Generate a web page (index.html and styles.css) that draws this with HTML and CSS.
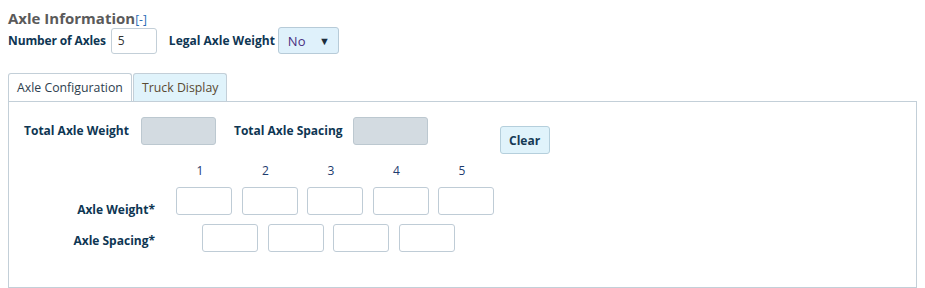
FILE: index.html
```html
<!DOCTYPE html>
<html lang="en">
<head>
<meta charset="UTF-8">
<title>Axle Information</title>
<link rel="stylesheet" href="styles.css">
</head>
<body>

<div class="section">
    <h3 class="title">Axle Information<a href="#" class="toggle">[-]</a></h3>

    <div class="top-row">
        <label class="lbl tight" for="numAxles">Number of Axles</label>
        <input type="text" id="numAxles" class="num-input" value="5">
        <label class="lbl legal" for="legal">Legal Axle Weight</label>
        <div class="select">
            <span class="select-val">No</span>
            <span class="select-arrow">&#9660;</span>
        </div>
    </div>

    <div class="tabs">
        <div class="tab active">Axle Configuration</div>
        <div class="tab">Truck Display</div>
    </div>

    <div class="panel">
        <div class="totals">
            <span class="lbl">Total Axle Weight</span>
            <div class="readonly"></div>
            <span class="lbl">Total Axle Spacing</span>
            <div class="readonly"></div>
            <button type="button" class="clear-btn">Clear</button>
        </div>

        <div class="grid-row numbers">
            <span class="row-label"></span>
            <span class="num">1</span>
            <span class="num">2</span>
            <span class="num">3</span>
            <span class="num">4</span>
            <span class="num">5</span>
        </div>
        <div class="grid-row weight">
            <span class="row-label">Axle Weight*</span>
            <input type="text" class="cell">
            <input type="text" class="cell">
            <input type="text" class="cell">
            <input type="text" class="cell">
            <input type="text" class="cell">
        </div>
        <div class="grid-row spacing">
            <span class="row-label">Axle Spacing*</span>
            <input type="text" class="cell">
            <input type="text" class="cell">
            <input type="text" class="cell">
            <input type="text" class="cell">
        </div>
    </div>
</div>

</body>
</html>
```

FILE: styles.css
```css
body {
    margin: 8px 8px 0 8px;
    font-family: "Open Sans", Arial, sans-serif;
    background-color: #fff;
    color: #333;
}
.title {
    margin: 0;
    font-size: 15px;
    font-weight: bold;
    color: #5a5a5a;
    line-height: 20px;
    height: 19px;
}
.toggle {
    font-size: 12px;
    font-weight: normal;
    color: #2a6db5;
    text-decoration: none;
}
.top-row {
    display: flex;
    align-items: center;
    height: 27px;
}
.lbl {
    font-size: 12px;
    font-weight: bold;
    color: #0e3653;
    white-space: nowrap;
}
.tight {
    letter-spacing: -0.13px;
}
.num-input {
    width: 46px;
    height: 26px;
    margin-left: 5px;
    padding: 0 6px;
    box-sizing: border-box;
    border: 1px solid #c3cfd8;
    border-radius: 3px;
    font-family: inherit;
    font-size: 12px;
    color: #333;
}
.legal {
    margin-left: 12px;
}
.select {
    display: flex;
    align-items: center;
    justify-content: space-between;
    width: 61px;
    height: 27px;
    margin-left: 3px;
    padding: 0 8px 0 9px;
    box-sizing: border-box;
    background-color: #dff1fb;
    border: 1px solid #b7cbd8;
    border-radius: 3px;
}
.select-val {
    font-size: 13px;
    color: #4a2f80;
}
.select-arrow {
    font-size: 11px;
    color: #1d2d3d;
}
.tabs {
    display: flex;
    margin-top: 19px;
}
.tab {
    height: 28px;
    line-height: 27px;
    padding: 0 8px;
    box-sizing: border-box;
    border: 1px solid #c3cfd8;
    border-bottom: none;
    border-radius: 3px 3px 0 0;
    font-size: 12.3px;
    white-space: nowrap;
    background-color: #e0f3fb;
    color: #5a4a32;
    margin-left: 1px;
}
.tab.active {
    background-color: #fff;
    color: #2e3e4e;
    margin-left: 0;
    width: 124px;
}
.panel {
    border: 1px solid #c3cfd8;
    height: 170px;
    padding: 15px 0 0 15px;
}
.totals {
    display: flex;
    align-items: flex-start;
}
.totals .lbl {
    margin-top: 5px;
}
.readonly {
    width: 75px;
    height: 28px;
    margin: 0 18px 0 12px;
    box-sizing: border-box;
    background-color: #d3dbe1;
    border: 1px solid #bcc8d0;
    border-radius: 3px;
}
.readonly + .lbl + .readonly {
    margin-left: 10px;
}
.clear-btn {
    margin-left: 54px;
    margin-top: 9px;
    height: 28px;
    width: 50px;
    padding: 0;
    background-color: #e0f3fb;
    border: 1px solid #b5cfdc;
    border-radius: 3px;
    font-family: inherit;
    font-size: 12px;
    font-weight: bold;
    color: #153a55;
}
.grid-row {
    display: flex;
    align-items: flex-start;
    gap: 9.5px;
}
.numbers {
    margin-top: 8px;
    line-height: 17px;
}
.row-label {
    width: 131px;
    margin-right: 11.5px;
    text-align: right;
    font-size: 12px;
    line-height: 16px;
    font-weight: bold;
    color: #0e3653;
}
.num {
    width: 48px;
    padding-right: 8px;
    text-align: center;
    font-size: 12px;
    color: #1e3c6e;
}
.cell {
    width: 56px;
    height: 28px;
    box-sizing: border-box;
    border: 1px solid #bfccd6;
    border-radius: 3px;
    padding: 0 4px;
}
.weight {
    margin-top: 8px;
}
.weight .row-label {
    margin-top: 15px;
}
.spacing {
    margin-top: 6px;
}
.spacing .row-label {
    margin-top: 9px;
}
.spacing .cell:first-of-type {
    margin-left: 26px;
}
```
